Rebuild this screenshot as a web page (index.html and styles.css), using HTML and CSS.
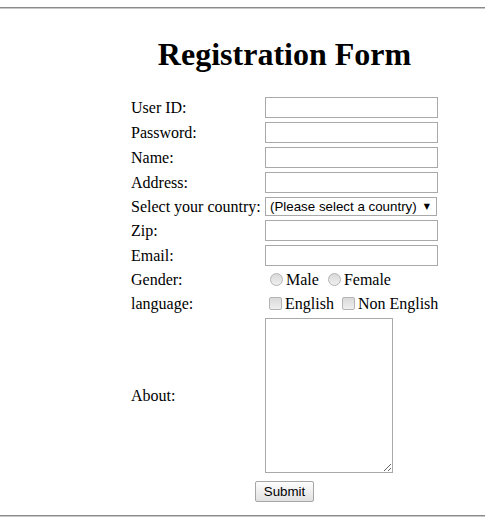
FILE: index.html
```html
<!DOCTYPE html>
<html>
<head>
<meta charset="utf-8">
<title>Registration Form</title>
<link rel="stylesheet" href="styles.css">
</head>
<body>
<div class="rule rule-top"></div>
<form class="form">
  <h1 class="title">Registration Form</h1>

  <label class="lbl">User ID:</label>
  <input class="txt" type="text">

  <label class="lbl">Password:</label>
  <input class="txt" type="password">

  <label class="lbl">Name:</label>
  <input class="txt" type="text">

  <label class="lbl">Address:</label>
  <input class="txt" type="text">

  <label class="lbl">Select your country:</label>
  <span class="sel-wrap"><select class="sel"><option>(Please select a country)</option></select></span>

  <label class="lbl">Zip:</label>
  <input class="txt" type="text">

  <label class="lbl">Email:</label>
  <input class="txt" type="text">

  <label class="lbl">Gender:</label>
  <span class="opts"><input class="radio" type="radio" name="g">Male <input class="radio" type="radio" name="g">Female</span>

  <label class="lbl">language:</label>
  <span class="opts"><input class="check" type="checkbox">English <input class="check" type="checkbox">Non English</span>

  <label class="lbl">About:</label>
  <textarea class="area"></textarea>

  <div class="actions"><button class="btn" type="button">Submit</button></div>
</form>
<div class="rule rule-bottom"></div>
</body>
</html>
```

FILE: styles.css
```css
html, body {
  margin: 0;
  padding: 0;
  background: #fff;
}
body {
  font-family: "Liberation Serif", "Times New Roman", serif;
  font-size: 16px;
  color: #000;
}
.rule {
  height: 0;
  border-top: 1px solid #8a8a8a;
  border-bottom: 1px solid #c8c8c8;
}
.rule-top {
  margin-top: 7px;
}
.rule-bottom {
  margin-top: 13px;
}
.form {
  display: grid;
  grid-template-columns: 130px 173px;
  column-gap: 4px;
  row-gap: 4px;
  align-items: center;
  margin: 27px 0 0 131px;
  width: 307px;
}
.title {
  grid-column: 1 / -1;
  text-align: center;
  font-size: 32px;
  font-weight: bold;
  line-height: 37px;
  margin: 0 0 20px 0;
}
.lbl {
  line-height: 18px;
  white-space: nowrap;
}
.txt {
  box-sizing: border-box;
  width: 173px;
  height: 21px;
  margin: 0;
  padding: 1px 2px;
  border: 1px solid #a9a9a9;
  font-family: "Liberation Sans", Arial, sans-serif;
  font-size: 13.33px;
  background: #fff;
}
.sel-wrap {
  position: relative;
  display: block;
  width: 172px;
  height: 19px;
}
.sel-wrap::after {
  content: "\25BC";
  position: absolute;
  right: 7px;
  top: 5px;
  font-family: "DejaVu Sans", sans-serif;
  font-size: 8px;
  line-height: 10px;
  color: #000;
  pointer-events: none;
}
.sel {
  -webkit-appearance: none;
  appearance: none;
  box-sizing: border-box;
  width: 172px;
  height: 19px;
  margin: 0;
  padding: 0 0 0 4px;
  border: 1px solid #a9a9a9;
  border-radius: 0;
  background: #fff;
  font-family: "Liberation Sans", Arial, sans-serif;
  font-size: 13.33px;
  color: #000;
}
.opts {
  display: block;
  height: 20px;
  line-height: 20px;
  white-space: nowrap;
}
.radio, .check {
  -webkit-appearance: none;
  appearance: none;
  box-sizing: border-box;
  display: inline-block;
  width: 13px;
  height: 13px;
  vertical-align: -1px;
  border: 1px solid #b4b4b4;
  background: linear-gradient(#d9d9d9, #efefef);
}
.radio {
  margin: 0 3px 0 5px;
  border-radius: 50%;
}
.check {
  margin: 0 3px 0 4px;
  border-radius: 2px;
}
.area {
  box-sizing: border-box;
  display: block;
  width: 128px;
  height: 155px;
  margin: 0;
  border: 1px solid #a9a9a9;
  padding: 2px;
  font-family: "Liberation Mono", monospace;
  font-size: 13.33px;
}
.actions {
  grid-column: 1 / -1;
  display: flex;
  justify-content: center;
  margin-top: 4px;
}
.btn {
  box-sizing: border-box;
  width: 59px;
  height: 21px;
  margin: 0;
  padding: 0 6px;
  border: 1px solid #a6a6a6;
  border-radius: 2px;
  background: linear-gradient(#fdfdfd, #e1e1e1);
  font-family: "Liberation Sans", Arial, sans-serif;
  font-size: 13.33px;
  color: #000;
}
```
